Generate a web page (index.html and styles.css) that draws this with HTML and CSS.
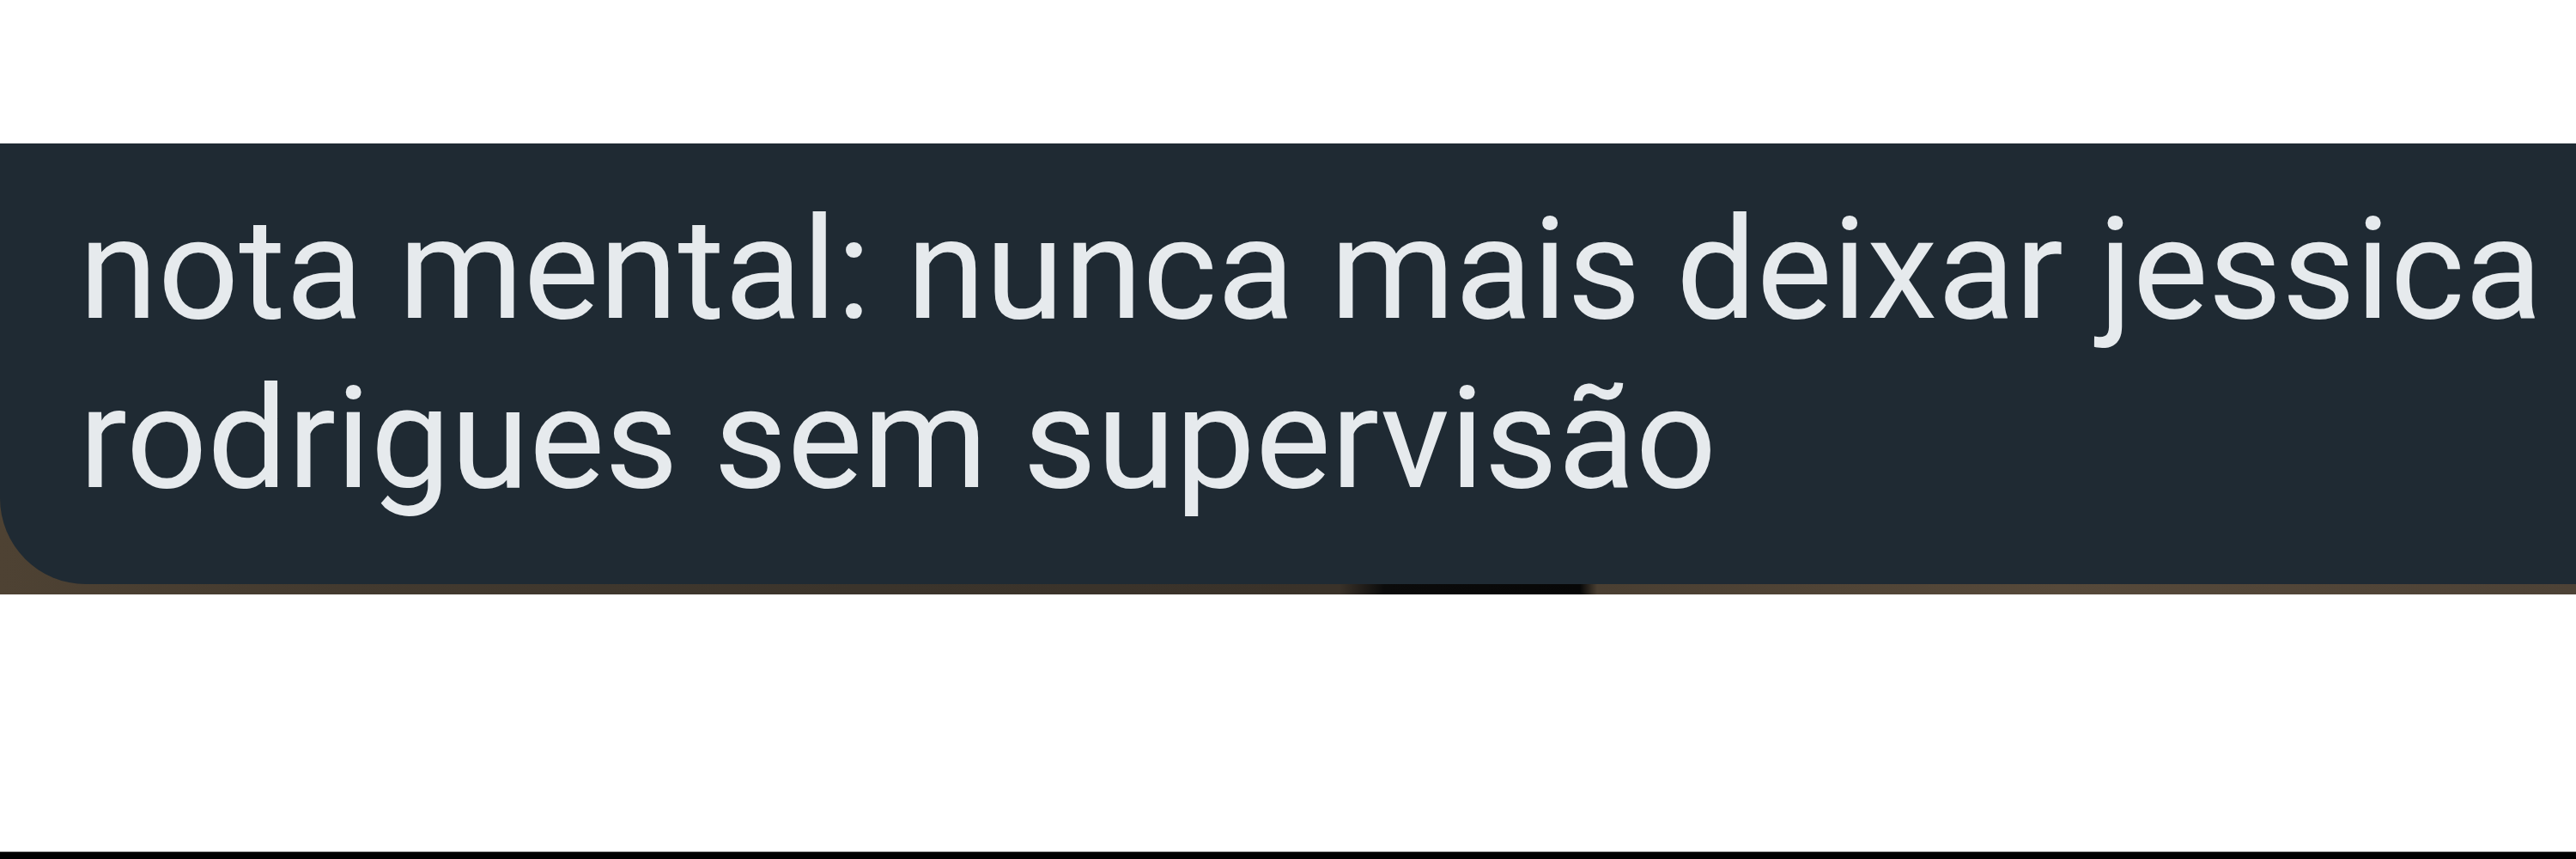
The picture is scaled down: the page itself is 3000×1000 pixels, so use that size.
FILE: index.html
```html
<!DOCTYPE html>
<html lang="pt">
<head>
<meta charset="utf-8">
<title>nota mental</title>
<link rel="stylesheet" href="styles.css">
</head>
<body>
<div class="page">
  <div class="gap-top"></div>
  <div class="photo">
    <div class="bubble">
      <p class="message">nota mental: nunca mais deixar jessica rodrigues sem supervisão</p>
    </div>
  </div>
  <div class="gap-bottom"></div>
  <div class="frame-edge"></div>
</div>
</body>
</html>
```

FILE: styles.css
```css
html, body {
  margin: 0;
  padding: 0;
  background: #ffffff;
}

.page {
  width: 3000px;
  height: 1000px;
  display: flex;
  flex-direction: column;
  overflow: hidden;
}

.gap-top {
  height: 167px;
  flex: none;
}

.photo {
  height: 525px;
  flex: none;
  display: flex;
  flex-direction: column;
  background:
    linear-gradient(to right,
      #4e4233 0px,
      #433a2f 400px,
      #3b342b 1000px,
      #3a3229 1560px,
      #0b0b0b 1612px,
      #070707 1840px,
      #4a3f32 1860px,
      #56493a 2400px,
      #4d4236 3000px);
}

.bubble {
  height: 513px;
  flex: none;
  background: #1f2a33;
  border-bottom-left-radius: 100px;
  box-sizing: border-box;
  padding: 48px 0 0 92px;
}

.message {
  margin: 0;
  font-family: Roboto, "Noto Sans", "Liberation Sans", sans-serif;
  font-size: 166px;
  line-height: 197px;
  color: #e6eaed;
  font-weight: 400;
}

.gap-bottom {
  flex: 1;
}

.frame-edge {
  height: 8px;
  flex: none;
  background: #000000;
  border-top: 1px solid #9a9a9a;
}
```
